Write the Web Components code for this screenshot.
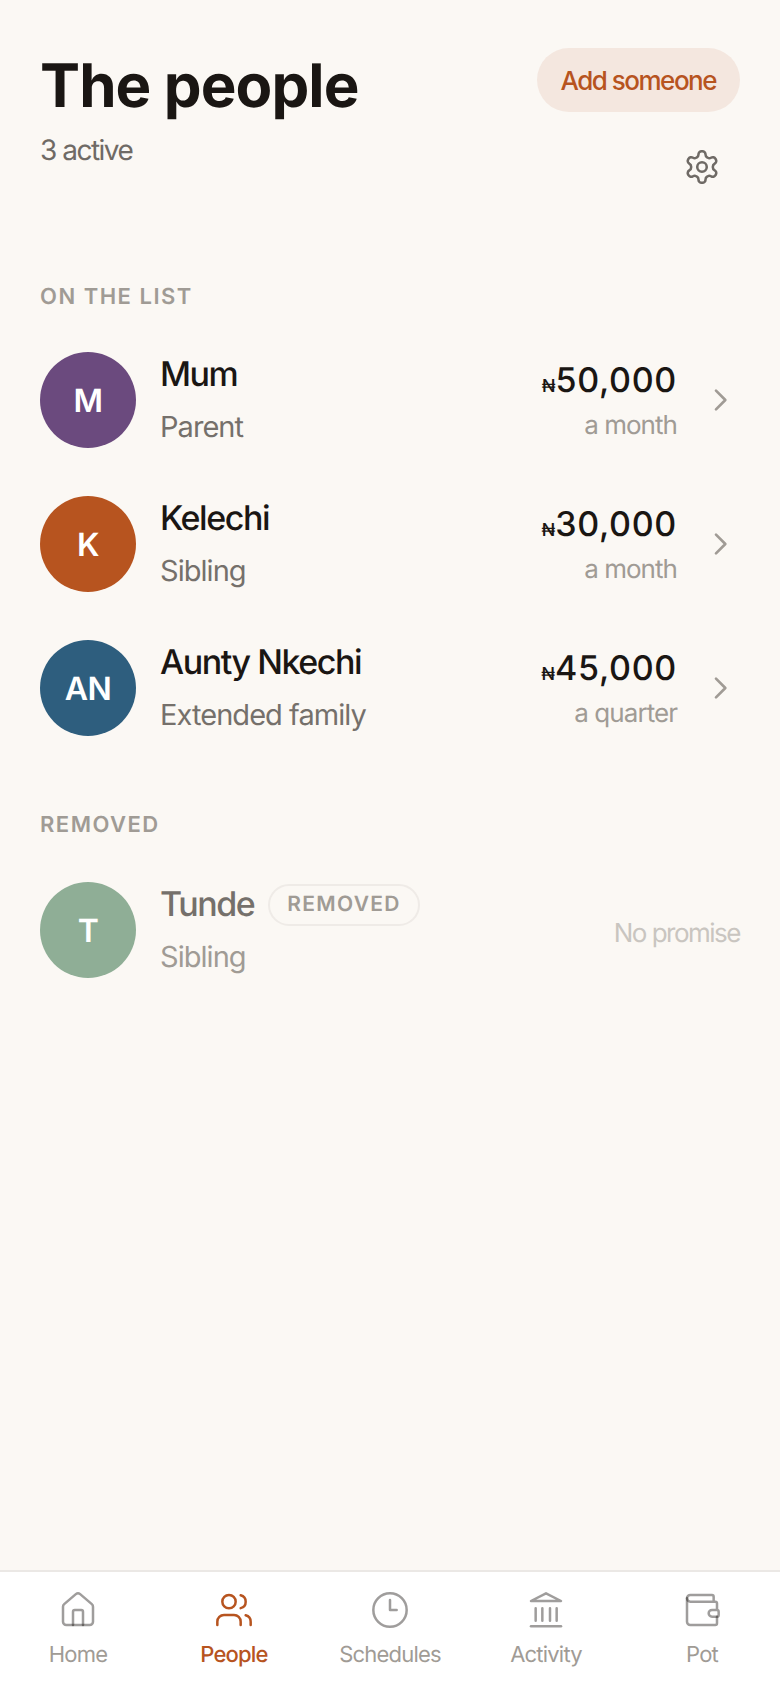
<!DOCTYPE html>
<html>
<head>
<meta charset="utf-8">
<title>The people</title>
<style>
html, body { margin: 0; height: 100%; }
body { background: #fbf8f4; font-family: Inter, "Liberation Sans", sans-serif; color: #1a1613; text-rendering: geometricPrecision; }
</style>
</head>
<body>
<people-screen></people-screen>
<script>
const icons = {
  home: '<path d="M15 21v-8a1 1 0 0 0-1-1h-4a1 1 0 0 0-1 1v8"/><path d="M3 10a2 2 0 0 1 .709-1.528l7-6a2 2 0 0 1 2.582 0l7 6A2 2 0 0 1 21 10v9a2 2 0 0 1-2 2H5a2 2 0 0 1-2-2z"/>',
  people: '<path d="M16 21v-2a4 4 0 0 0-4-4H6a4 4 0 0 0-4 4v2"/><path d="M16 3.13a4 4 0 0 1 0 7.75"/><path d="M22 21v-2a4 4 0 0 0-3-3.87"/><circle cx="9" cy="7" r="4"/>',
  clock: '<circle cx="12" cy="12" r="10"/><path d="M12 6v6h4"/>',
  bank: '<path d="M3 6.600 12 2l9 4.600z"/><path d="M3 21.800h18"/><path d="M5.800 11v7.400M9.800 11v7.400M14.400 11v7.400M18.400 11v7.400"/>',
  wallet: '<path d="M19 7V4a1 1 0 0 0-1-1H5a2 2 0 0 0 0 4h15a1 1 0 0 1 1 1v4h-3a2 2 0 0 0 0 4h3a1 1 0 0 0 1-1v-2a1 1 0 0 0-1-1"/><path d="M3 5v14a2 2 0 0 0 2 2h15a1 1 0 0 0 1-1v-4"/>',
  gear: '<path d="M12.220 2h-.44a2 2 0 0 0-2 2v.18a2 2 0 0 1-1 1.730l-.43.25a2 2 0 0 1-2 0l-.15-.08a2 2 0 0 0-2.730.73l-.22.38a2 2 0 0 0 .73 2.730l.15.1a2 2 0 0 1 1 1.720v.51a2 2 0 0 1-1 1.740l-.15.09a2 2 0 0 0-.73 2.730l.22.38a2 2 0 0 0 2.730.73l.15-.08a2 2 0 0 1 2 0l.43.25a2 2 0 0 1 1 1.730V20a2 2 0 0 0 2 2h.44a2 2 0 0 0 2-2v-.18a2 2 0 0 1 1-1.730l.43-.25a2 2 0 0 1 2 0l.15.08a2 2 0 0 0 2.730-.73l.22-.39a2 2 0 0 0-.73-2.730l-.15-.08a2 2 0 0 1-1-1.740v-.5a2 2 0 0 1 1-1.740l.15-.09a2 2 0 0 0 .73-2.730l-.22-.38a2 2 0 0 0-2.730-.73l-.15.08a2 2 0 0 1-2 0l-.43-.25a2 2 0 0 1-1-1.730V4a2 2 0 0 0-2-2z"/><circle cx="12" cy="12" r="3"/>',
  chevron: '<path d="M9 5l7 7-7 7"/>'
};
const svg = (name, size, width) => `<svg width="${size}" height="${size}" viewBox="0 0 24 24" fill="none" stroke="currentColor" stroke-width="${width}" stroke-linecap="round" stroke-linejoin="round">${icons[name]}</svg>`;

class PeopleScreen extends HTMLElement {
  constructor() {
    super();
    this.attachShadow({ mode: "open" });
    this.shadowRoot.innerHTML = `
    <style>
      :host { display: flex; flex-direction: column; height: 1688px; }
      main { flex: 1; padding: 48px 40px 0; }
      header { display: flex; justify-content: space-between; align-items: flex-start; height: 232px; }
      h1 { margin: 2px 0 0; font-size: 60px; line-height: 72px; font-weight: 700; letter-spacing: -.9px; }
      p { margin: 8px 0 0; font-size: 28px; line-height: 40px; letter-spacing: -1.5px; color: #6f6a65; }
      .side { display: flex; flex-direction: column; align-items: flex-end; }
      button { height: 64px; padding: 0 24px; border: 0; border-radius: 32px; background: #f4e7df; color: #b7541f; font: 500 26px Inter, sans-serif; letter-spacing: -1.5px; }
      .gear { display: flex; color: #6f6a65; margin: 36px 19px 0 0; }
      .rows { display: flex; flex-direction: column; }
    </style>
    <main>
      <header>
        <div><h1>The people</h1><p>3 active</p></div>
        <div class="side"><button>Add someone</button><span class="gear">${svg("gear", 38, 1.6)}</span></div>
      </header>
      <section-label>ON THE LIST</section-label>
      <div class="rows">
        <person-row name="Mum" role="Parent" initials="M" color="#6b4a7e" amount="50,000" period="a month"></person-row>
        <person-row name="Kelechi" role="Sibling" initials="K" color="#b7541f" amount="30,000" period="a month"></person-row>
        <person-row name="Aunty Nkechi" role="Extended family" initials="AN" color="#2e5e7e" amount="45,000" period="a quarter"></person-row>
      </div>
      <section-label style="margin-top:48px;margin-bottom:16px">REMOVED</section-label>
      <div class="rows">
        <person-row removed name="Tunde" role="Sibling" initials="T" color="#8fae96"></person-row>
      </div>
    </main>
    <nav-bar></nav-bar>`;
  }
}

class SectionLabel extends HTMLElement {
  constructor() {
    super();
    this.attachShadow({ mode: "open" });
    this.shadowRoot.innerHTML = `
    <style>
      :host { display: block; font-size: 22px; line-height: 34px; font-weight: 600; letter-spacing: 1.5px; color: #a09b95; margin-bottom: 14px; }
    </style>
    <slot></slot>`;
  }
}

class PersonRow extends HTMLElement {
  constructor() {
    super();
    this.attachShadow({ mode: "open" });
  }
  connectedCallback() {
    const a = (n) => this.getAttribute(n);
    const removed = this.hasAttribute("removed");
    const right = removed
      ? `<div class="none">No promise</div>`
      : `<div class="money"><div class="amount"><span class="naira">₦</span>${a("amount")}</div><div class="period">${a("period")}</div></div><span class="chev">${svg("chevron", 32, 2)}</span>`;
    this.shadowRoot.innerHTML = `
    <style>
      :host { display: flex; align-items: center; height: 144px; gap: 24px; }
      .avatar { width: 96px; height: 96px; border-radius: 50%; flex: none; display: flex; align-items: center; justify-content: center; background: ${a("color")}; color: #fff; font-size: 32px; font-weight: 600; letter-spacing: -.6px; }
      .who { flex: 1; min-width: 0; }
      .name { display: flex; align-items: center; gap: 16px; font-size: 34px; line-height: 44px; font-weight: 500; letter-spacing: -1.45px; color: ${removed ? "#75706b" : "#1a1613"}; }
      .role { margin-top: 10px; font-size: 29px; line-height: 40px; letter-spacing: -.95px; color: ${removed ? "#a09b95" : "#75706b"}; }
      .tag { font-size: 21px; line-height: 38px; font-weight: 600; letter-spacing: 1.3px; color: #a09b95; border: 2px solid #efebe7; border-radius: 21px; padding: 0 17px; margin-left: -2px; }
      .money { text-align: right; padding-top: 3px; }
      .amount { font-size: 34px; line-height: 44px; font-weight: 500; letter-spacing: .7px; }
      .naira { font-size: 18px; letter-spacing: 0; font-weight: 500; }
      .period { margin-top: -1px; font-size: 26px; line-height: 36px; letter-spacing: -.95px; color: #a09b95; }
      .chev { display: flex; color: #a09b95; margin: 0 4px 0 3px; }
      .none { margin-top: 6px; font-size: 26px; letter-spacing: -1.5px; color: #c9c5c0; }
    </style>
    <div class="avatar">${a("initials")}</div>
    <div class="who"><div class="name">${a("name")}${removed ? '<span class="tag">REMOVED</span>' : ""}</div><div class="role">${a("role")}</div></div>
    ${right}`;
  }
}

class NavBar extends HTMLElement {
  constructor() {
    super();
    this.attachShadow({ mode: "open" });
    const tabs = [["home", "Home"], ["people", "People", true], ["clock", "Schedules"], ["bank", "Activity"], ["wallet", "Pot"]];
    this.shadowRoot.innerHTML = `
    <style>
      :host { display: grid; grid-template-columns: repeat(5, 1fr); height: 118px; box-sizing: border-box; padding-top: 18px; background: #fff; border-top: 2px solid #ebe8e5; }
      a { display: flex; flex-direction: column; align-items: center; color: #a09b95; font-size: 22px; line-height: 32px; letter-spacing: -.8px; }
      a.on { color: #b7541f; font-weight: 500; }
      a:not(.on) svg { stroke: #1a1613; stroke-opacity: .42; }
      svg { display: block; margin-bottom: 9px; }
    </style>
    ${tabs.map(([i, t, on]) => `<a class="${on ? "on" : ""}">${svg(i, 40, 1.5)}${t}</a>`).join("")}`;
  }
}

customElements.define("section-label", SectionLabel);
customElements.define("person-row", PersonRow);
customElements.define("nav-bar", NavBar);
customElements.define("people-screen", PeopleScreen);
</script>
</body>
</html>
